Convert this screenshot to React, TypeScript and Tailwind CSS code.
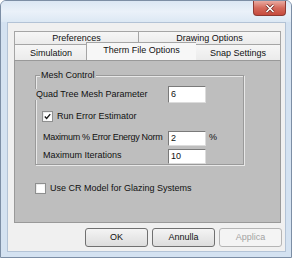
import { ReactNode } from "react";

function Casella({ checked }: { checked?: boolean }) {
  return (
    <div className="w-[11px] h-[11px] shrink-0 border border-[#8e8f8f] bg-gradient-to-br from-[#e6e6e6] to-white p-[1px]">
      <div className="w-full h-full bg-white flex items-center justify-center">
        {checked && (
          <svg width="9" height="9" viewBox="0 0 9 9">
            <path d="M1 4.5 L3.4 7 L8 1.5" fill="none" stroke="#1a1a1a" strokeWidth="1.8" />
          </svg>
        )}
      </div>
    </div>
  );
}

function Campo({ valore, alto }: { valore: string; alto?: boolean }) {
  return (
    <div
      className={`w-[38px] ${alto ? "h-[17px]" : "h-[15px]"} shrink-0 bg-white border border-t-[#7a7a7a] border-l-[#7a7a7a] border-r-[#dcdcdc] border-b-[#dcdcdc] flex items-center pl-[2px] leading-none`}
    >
      {valore}
    </div>
  );
}

function Scheda({ children, larghezza, attiva }: { children: ReactNode; larghezza: string; attiva?: boolean }) {
  return (
    <div
      className={`${larghezza} flex items-center justify-center whitespace-nowrap border-t border-l border-[#a5a5a5] ${
        attiva ? "bg-[#f7f7f7] h-[18px] relative z-10 pb-[2px]" : "bg-gradient-to-b from-[#f6f6f6] to-[#ebebeb] h-full pt-[2px]"
      }`}
    >
      {children}
    </div>
  );
}

function Bottone({ children, disabilitato }: { children: ReactNode; disabilitato?: boolean }) {
  return (
    <div
      className={`w-[63px] h-[19px] rounded-[3px] border flex items-center justify-center ${
        disabilitato
          ? "border-[#b5b5b5] bg-[#f4f4f4] text-[#a3a3a3]"
          : "border-[#707070] bg-gradient-to-b from-[#f4f4f4] to-[#dddddd] text-[#111]"
      }`}
    >
      {children}
    </div>
  );
}

export default function App() {
  return (
    <div className="w-[292px] h-[258px] flex flex-col bg-[#d4e2f1] border border-[#7c8ea5] rounded-t-[6px] overflow-hidden font-['Liberation_Sans',Arial,sans-serif] text-[9px] text-[#111] whitespace-nowrap">
      {/* barra del titolo */}
      <div className="h-[21px] shrink-0 flex justify-end pr-[5px] bg-gradient-to-b from-[#dbe7f4] via-[#eaf1f9] to-[#dce8f4]">
        <div className="w-[33px] h-[15px] rounded-b-[4px] border border-t-0 border-[#8d3a32] bg-gradient-to-b from-[#e8aaa1] via-[#d4695b] to-[#c64a3d] flex items-center justify-center">
          <svg width="10" height="9" viewBox="0 0 10 9">
            <path d="M1.5 1 L8.5 8 M8.5 1 L1.5 8" stroke="#6b2620" strokeWidth="3" />
            <path d="M1.5 1 L8.5 8 M8.5 1 L1.5 8" stroke="#ffffff" strokeWidth="1.6" />
          </svg>
        </div>
      </div>

      {/* area client */}
      <div className="flex-1 flex pl-[6px] pr-[5px] pb-[5px]">
        <div className="flex-1 flex flex-col bg-[#f0f0f0] border border-[#b3c3d6]">
          <div className="mt-[8px] ml-[6px] mr-[4px] flex flex-col">
            {/* prima riga schede */}
            <div className="h-[13px] flex">
              <Scheda larghezza="w-[124px]">Preferences</Scheda>
              <Scheda larghezza="w-[143px] border-r">Drawing Options</Scheda>
            </div>
            {/* seconda riga schede */}
            <div className="h-[16px] flex items-end">
              <Scheda larghezza="w-[73px]">Simulation</Scheda>
              <Scheda larghezza="w-[110px] -mx-[1px]" attiva>
                Therm File Options
              </Scheda>
              <Scheda larghezza="w-[86px] border-r">Snap Settings</Scheda>
            </div>

            {/* pannello */}
            <div className="h-[163px] bg-[#bebebe] border border-[#999999] flex flex-col">
              <div className="relative mt-[14px] ml-[20px] w-[209px] h-[90px] border border-[#9a9a9a] shadow-[inset_1px_1px_0_#e8e8e8,1px_1px_0_#e8e8e8] flex flex-col">
                <span className="absolute -top-[6px] left-[4px] px-[1px] bg-[#bebebe] leading-[11px]">Mesh Control</span>

                <div className="mt-[10px] flex items-center">
                  <span className="w-[135px] -ml-[3px] pl-[3px] bg-[#bebebe] leading-[11px]">Quad Tree Mesh Parameter</span>
                  <Campo valore="6" alto />
                </div>

                <div className="mt-[7px] ml-[6px] flex items-center gap-[4px]">
                  <Casella checked />
                  <span>Run Error Estimator</span>
                </div>

                <div className="mt-[7px] ml-[7px] flex items-center">
                  <span className="w-[125px] tracking-[-0.3px]">Maximum % Error Energy Norm</span>
                  <Campo valore="2" />
                  <span className="ml-[3px]">%</span>
                </div>

                <div className="mt-[3px] ml-[7px] flex items-center">
                  <span className="w-[125px]">Maximum Iterations</span>
                  <Campo valore="10" />
                </div>
              </div>

              <div className="mt-[17px] ml-[20px] flex items-center gap-[4px]">
                <Casella />
                <span>Use CR Model for Glazing Systems</span>
              </div>
            </div>

            {/* bottoni */}
            <div className="mt-[5px] flex justify-end gap-[4px] -mr-[1px]">
              <Bottone>OK</Bottone>
              <Bottone>Annulla</Bottone>
              <Bottone disabilitato>Applica</Bottone>
            </div>
          </div>
        </div>
      </div>
    </div>
  );
}
